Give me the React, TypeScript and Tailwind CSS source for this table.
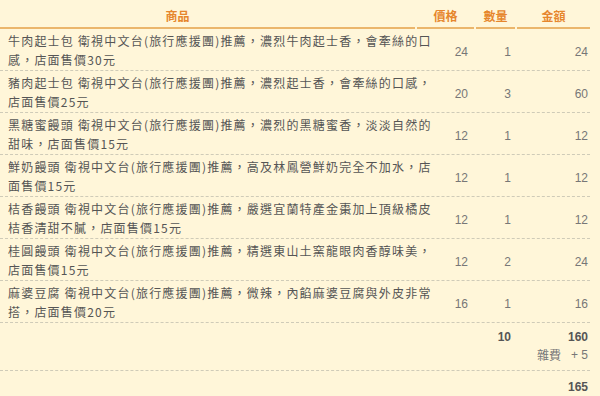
const items = [
  { lines: ['牛肉起士包 衛視中文台(旅行應援團)推薦，濃烈牛肉起士香，會牽絲的口', '感，店面售價30元'], price: 24, qty: 1 },
  { lines: ['豬肉起士包 衛視中文台(旅行應援團)推薦，濃烈起士香，會牽絲的口感，', '店面售價25元'], price: 20, qty: 3 },
  { lines: ['黑糖蜜饅頭 衛視中文台(旅行應援團)推薦，濃烈的黑糖蜜香，淡淡自然的', '甜味，店面售價15元'], price: 12, qty: 1 },
  { lines: ['鮮奶饅頭 衛視中文台(旅行應援團)推薦，高及林鳳營鮮奶完全不加水，店', '面售價15元'], price: 12, qty: 1 },
  { lines: ['桔香饅頭 衛視中文台(旅行應援團)推薦，嚴選宜蘭特產金棗加上頂級橘皮', '桔香清甜不膩，店面售價15元'], price: 12, qty: 1 },
  { lines: ['桂圓饅頭 衛視中文台(旅行應援團)推薦，精選東山土窯龍眼肉香醇味美，', '店面售價15元'], price: 12, qty: 2 },
  { lines: ['麻婆豆腐 衛視中文台(旅行應援團)推薦，微辣，內餡麻婆豆腐與外皮非常', '搭，店面售價20元'], price: 16, qty: 1 },
];

const cols = 'grid grid-cols-[415px_57px_39px_73px] gap-x-[2px]';

export default function App() {
  const totalQty = items.reduce((s, i) => s + i.qty, 0);
  const subtotal = items.reduce((s, i) => s + i.price * i.qty, 0);
  const fee = 5;

  return (
    <div className="min-h-[396px] w-[600px] bg-[#fff6d9] font-['Noto_Sans_CJK_TC','Noto_Sans',sans-serif] text-[12px] text-[#555]">
      <div className="w-[590px]">
        {/* header */}
        <div className={cols}>
          {['商品', '價格', '數量', '金額'].map((h, i) => (
            <div
              key={h}
              className={`border-b-2 border-[#ebb66c] pt-[6px] pb-[2px] text-center font-bold leading-[19px] text-[#e6862c] ${i === 0 ? 'pr-[60px]' : ''}`}
            >
              {h}
            </div>
          ))}
        </div>

        {/* items */}
        {items.map((item, idx) => (
          <div key={idx} className={`${cols} border-b border-dashed border-[#cfcbb8]`}>
            <div className="pt-[2px] pb-[1px] pl-[8px] leading-[19px] tracking-[1.2px]">
              {item.lines.map((l, j) => (
                <div key={j} className="whitespace-nowrap">{l}</div>
              ))}
            </div>
            <div className="flex items-center justify-end pt-[4px] pr-[6px] font-['Liberation_Sans',sans-serif] text-[12px] text-[#777]">
              {item.price}
            </div>
            <div className="flex items-center justify-end pt-[4px] pr-[4px] font-['Liberation_Sans',sans-serif] text-[12px] text-[#777]">
              {item.qty}
            </div>
            <div className="flex items-center justify-end pt-[4px] pr-[2px] font-['Liberation_Sans',sans-serif] text-[12px] text-[#777]">
              {item.price * item.qty}
            </div>
          </div>
        ))}

        {/* totals */}
        <div className="border-b border-dashed border-[#cfcbb8] pt-[5px] pb-[6px] font-['Liberation_Sans','Noto_Sans_CJK_TC',sans-serif] text-[12px] leading-[18px]">
          <div className={cols}>
            <div />
            <div />
            <div className="pr-[4px] text-right font-bold text-[#555]">{totalQty}</div>
            <div className="pr-[2px] text-right font-bold text-[#555]">{subtotal}</div>
          </div>
          <div className="flex justify-end gap-[10px] pr-[2px] text-[#777]">
            <span className="font-['Noto_Sans_CJK_TC',sans-serif]">雜費</span>
            <span>+ {fee}</span>
          </div>
        </div>
        <div className="pt-[7px] pr-[2px] text-right font-['Liberation_Sans',sans-serif] text-[12px] font-bold leading-[18px] text-[#555]">
          {subtotal + fee}
        </div>
      </div>
    </div>
  );
}
